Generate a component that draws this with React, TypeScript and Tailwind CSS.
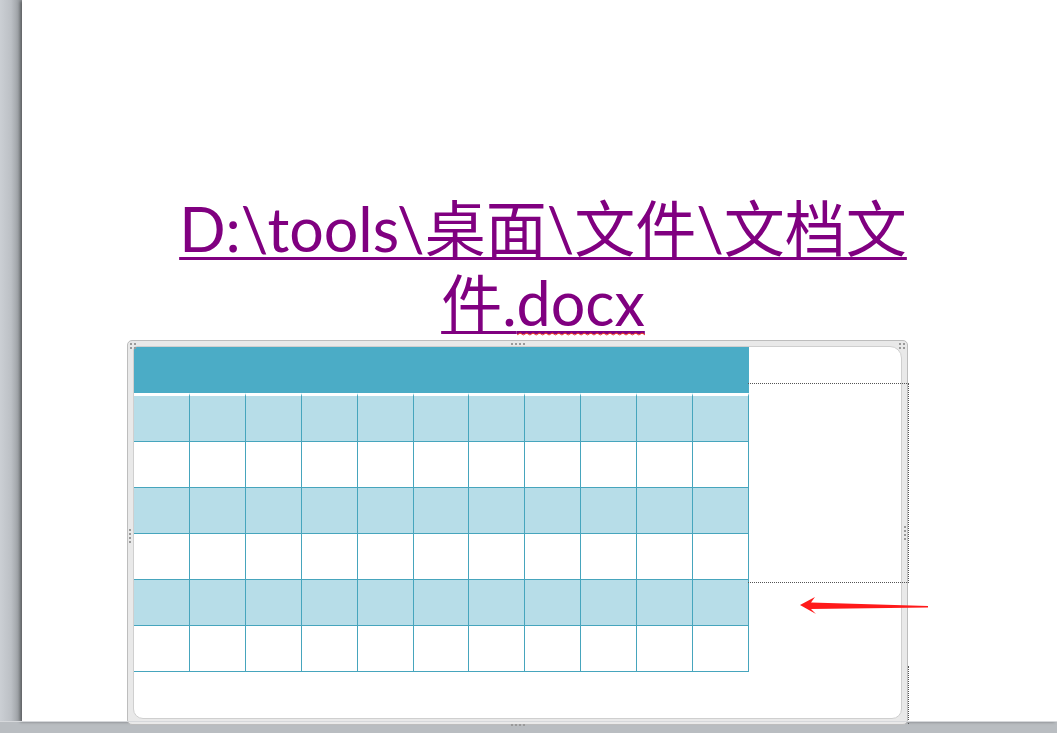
const cols = Array.from({ length: 11 });
const rows = [true, false, true, false, true, false];

const Handle = ({ className }: { className: string }) => (
  <div className={`absolute flex gap-[2px] ${className}`}>
    <div className="w-[2px] h-[2px] bg-[#9a9a9a]" />
    <div className="w-[2px] h-[2px] bg-[#9a9a9a]" />
    <div className="w-[2px] h-[2px] bg-[#9a9a9a]" />
    <div className="w-[2px] h-[2px] bg-[#9a9a9a]" />
  </div>
);

const TableFrame = () => {
  return (
    <div className="relative ml-[105px] w-[781px] h-[385px] border border-[#bdbdbd] rounded-[5px] bg-[#e9e9e9] p-[5px]">
      <div className="w-full h-full bg-white border border-[#cfcfcf] rounded-tl-[4px] rounded-tr-[12px] rounded-b-[10px]">
        <div className="w-[615px]">
          <div className="h-[46px] bg-[#4bacc6] rounded-tl-[3px]" />
          {rows.map((shaded, r) => (
            <div key={r} className="flex">
              {cols.map((_, c) => (
                <div
                  key={c}
                  className={`flex-1 border-r border-b border-[#46a5bd] ${r === 0 ? "h-[49px] border-t-[3px] border-t-white" : "h-[46px]"} ${shaded ? "bg-[#b7dde8]" : "bg-white"}`}
                />
              ))}
            </div>
          ))}
        </div>
      </div>

      {/* text box outline on the right */}
      <div className="absolute left-[620px] top-[42px] w-[161px] h-[200px] border-t border-b border-r border-dotted border-[#555]" />
      <div className="absolute left-[780px] top-[325px] h-[58px] border-r border-dotted border-[#555]" />

      <Handle className="left-[383px] top-[2px]" />
      <Handle className="left-[383px] bottom-[-2px]" />
      <Handle className="left-[1px] top-[188px] flex-col" />
      <Handle className="right-[1px] top-[185px] flex-col" />
      <Handle className="left-[2px] top-[2px] flex-wrap w-[6px]" />
      <Handle className="right-[2px] top-[2px] flex-wrap w-[6px]" />
    </div>
  );
};

const App = () => {
  return (
    <div className="relative w-[1057px] h-[733px] overflow-hidden bg-[#b9bdc1] flex">
      <div className="w-[22px] h-[721px] bg-gradient-to-r from-[#cbcfd4] via-[#bcc0c5] to-[#8f9397]" />
      <div className="flex-1 h-[721px] bg-white shadow-[-2px_1px_3px_rgba(0,0,0,0.35)]">
        <div className="pt-[192px] ml-[156px] w-[730px] text-center whitespace-nowrap text-[61px] leading-[74px] text-[#800080] font-['Lato','Noto_Sans_CJK_SC',sans-serif] underline decoration-[3px] underline-offset-[5px]">
          <span>D:\tools\桌面\文件\文档文</span>
          <br />
          <span>
            件.
            <span className="relative">
              docx
              <svg className="absolute left-0 bottom-[3px]" width="100%" height="4" preserveAspectRatio="none" viewBox="0 0 80 4">
                <path d="M0 3 L2 1 L4 3 L6 1 L8 3 L10 1 L12 3 L14 1 L16 3 L18 1 L20 3 L22 1 L24 3 L26 1 L28 3 L30 1 L32 3 L34 1 L36 3 L38 1 L40 3 L42 1 L44 3 L46 1 L48 3 L50 1 L52 3 L54 1 L56 3 L58 1 L60 3 L62 1 L64 3 L66 1 L68 3 L70 1 L72 3 L74 1 L76 3 L78 1 L80 3" fill="none" stroke="#e8392a" strokeWidth="0.8" />
              </svg>
            </span>
          </span>
        </div>
        <TableFrame />
      </div>
      <div className="absolute left-0 right-0 top-[721px] h-[1px] bg-[#d6d8db]" />

      <svg className="absolute left-0 top-0" width="1057" height="733">
        <polygon points="800,605 815,597 811,602.5 928,606 928,607.4 811,609 816,614" fill="#ff1a1a" />
      </svg>
    </div>
  );
};

export default App;
